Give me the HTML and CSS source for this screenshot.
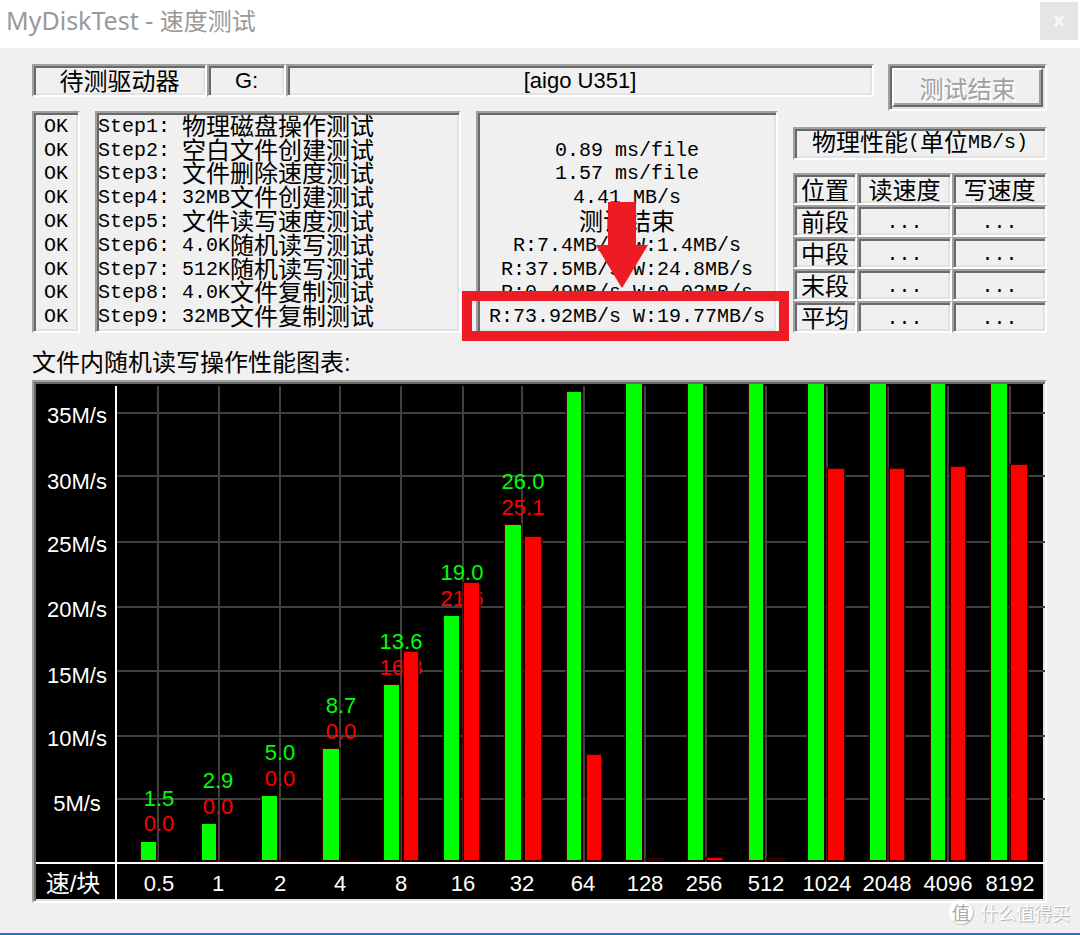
FILE: index.html
```html
<!DOCTYPE html>
<html lang="zh-CN">
<head>
<meta charset="utf-8">
<title>MyDiskTest - 速度测试</title>
<link rel="stylesheet" href="styles.css">
</head>
<body>
<header class="titlebar">
  <h1 class="title">MyDiskTest - <span class="zh">速度测试</span></h1>
  <button class="close" type="button" aria-label="关闭">
    <svg width="12" height="12" viewBox="0 0 12 12"><path d="M2 1L10 11M10 1L2 11" stroke="#f6f6f6" stroke-width="3"/></svg>
  </button>
</header>
<main class="window">
  <section class="top">
    <div class="drive">
      <div class="sunken drive-label zh">待测驱动器</div>
      <div class="sunken drive-letter">G:</div>
      <div class="sunken drive-name">[aigo U351]</div>
    </div>
    <div class="finish-wrap sunken"><button class="finish zh" type="button" disabled>测试结束</button></div>
  </section>

  <section class="panels">
    <ul class="sunken list status">
      <li>OK</li><li>OK</li><li>OK</li><li>OK</li><li>OK</li><li>OK</li><li>OK</li><li>OK</li><li>OK</li>
    </ul>
    <ul class="sunken list steps">
      <li>Step1: <span class="zh">物理磁盘操作测试</span></li>
      <li>Step2: <span class="zh">空白文件创建测试</span></li>
      <li>Step3: <span class="zh">文件删除速度测试</span></li>
      <li>Step4: 32MB<span class="zh">文件创建测试</span></li>
      <li>Step5: <span class="zh">文件读写速度测试</span></li>
      <li>Step6: 4.0K<span class="zh">随机读写测试</span></li>
      <li>Step7: 512K<span class="zh">随机读写测试</span></li>
      <li>Step8: 4.0K<span class="zh">文件复制测试</span></li>
      <li>Step9: 32MB<span class="zh">文件复制测试</span></li>
    </ul>
    <div class="results">
      <ul class="sunken list values">
        <li></li>
        <li>0.89 ms/file</li>
        <li>1.57 ms/file</li>
        <li>4.41 MB/s</li>
        <li><span class="zh">测试结束</span></li>
        <li>R:7.4MB/s W:1.4MB/s</li>
        <li>R:37.5MB/s W:24.8MB/s</li>
        <li>R:0.49MB/s W:0.02MB/s</li>
        <li>R:73.92MB/s W:19.77MB/s</li>
      </ul>
      <svg class="arrow" width="52" height="86" viewBox="0 0 52 86"><path d="M12 0H40V43H52L28 83L26 86L24 83L0 43H12Z" fill="#ed1c24"/></svg>
      <div class="marker"></div>
    </div>
    <div class="physical">
      <h2 class="sunken physical-title"><span class="zh">物理性能</span>(<span class="zh">单位</span>MB/s)</h2>
      <table class="grid">
        <thead><tr><th class="sunken pos">位置</th><th class="sunken">读速度</th><th class="sunken">写速度</th></tr></thead>
        <tbody>
          <tr><th class="sunken">前段</th><td class="sunken">...</td><td class="sunken">...</td></tr>
          <tr><th class="sunken">中段</th><td class="sunken">...</td><td class="sunken">...</td></tr>
          <tr><th class="sunken">末段</th><td class="sunken">...</td><td class="sunken">...</td></tr>
          <tr><th class="sunken">平均</th><td class="sunken">...</td><td class="sunken">...</td></tr>
        </tbody>
      </table>
    </div>
  </section>

  <h2 class="chart-title">文件内随机读写操作性能图表:</h2>
  <figure class="sunken chart">
    <svg class="plot" viewBox="0 0 1009 517" role="img" aria-label="文件内随机读写操作性能图表">
      <g class="gridlines">
        <path d="M81 29H1009M81 92H1009M81 158H1009M81 223H1009M81 287H1009M81 352H1009M81 415H1009"/>
        <path d="M122 2V478M183 2V478M244 2V478M304 2V478M365 2V478M427 2V478M486 2V478M548 2V478M609 2V478M670 2V478M730 2V478M791 2V478M852 2V478M912 2V478M974 2V478"/>
      </g>
      <g class="read-text">
        <text x="123" y="422">1.5</text><text x="182" y="404">2.9</text><text x="244" y="376">5.0</text><text x="305" y="329">8.7</text>
        <text x="365" y="265">13.6</text><text x="426" y="196">19.0</text><text x="487" y="105">26.0</text>
      </g>
      <g class="write-text">
        <text x="123" y="447">0.0</text><text x="182" y="430">0.0</text><text x="244" y="402">0.0</text><text x="305" y="355">0.0</text>
        <text x="365" y="291">16.3</text><text x="426" y="222">21.6</text><text x="487" y="131">25.1</text>
      </g>
      <g class="faint">
        <rect x="122" y="476" width="20" height="2"/><rect x="183" y="476" width="20" height="2"/><rect x="243" y="476" width="20" height="2"/><rect x="304" y="476" width="20" height="2"/>
        <rect x="609" y="474" width="19" height="3"/><rect x="730" y="474" width="19" height="3"/>
      </g>
      <g class="read-bars">
        <rect x="105" y="458" width="15" height="18"/>
        <rect x="166" y="440" width="14" height="36"/>
        <rect x="226" y="412" width="15" height="64"/>
        <rect x="287" y="365" width="16" height="111"/>
        <rect x="348" y="301" width="15" height="175"/>
        <rect x="408" y="232" width="15" height="244"/>
        <rect x="469" y="141" width="16" height="335"/>
        <rect x="531" y="8" width="14" height="468"/>
        <rect x="590" y="0" width="16" height="476"/>
        <rect x="652" y="0" width="15" height="476"/>
        <rect x="713" y="0" width="14" height="476"/>
        <rect x="772" y="0" width="16" height="476"/>
        <rect x="834" y="0" width="16" height="476"/>
        <rect x="895" y="0" width="14" height="476"/>
        <rect x="955" y="0" width="16" height="476"/>
      </g>
      <g class="write-bars">
        <rect x="368" y="268" width="14" height="208"/>
        <rect x="428" y="199" width="15" height="277"/>
        <rect x="489" y="153" width="16" height="323"/>
        <rect x="551" y="371" width="14" height="105"/>
        <rect x="671" y="474" width="15" height="2"/>
        <rect x="792" y="85" width="16" height="391"/>
        <rect x="854" y="85" width="14" height="391"/>
        <rect x="915" y="83" width="14" height="393"/>
        <rect x="975" y="81" width="16" height="395"/>
      </g>
      <path class="axes" d="M0 479H1009M80 2V517"/>
      <g class="labels">
        <text x="41" y="39">35M/s</text><text x="41" y="105">30M/s</text><text x="41" y="168">25M/s</text><text x="41" y="233">20M/s</text>
        <text x="41" y="299">15M/s</text><text x="41" y="362">10M/s</text><text x="41" y="427">5M/s</text>
        <text class="axis-name" x="37" y="508">速/块</text>
        <text x="123" y="507">0.5</text><text x="182" y="507">1</text><text x="244" y="507">2</text><text x="304" y="507">4</text>
        <text x="365" y="507">8</text><text x="427" y="507">16</text><text x="486" y="507">32</text><text x="547" y="507">64</text>
        <text x="609" y="507">128</text><text x="668" y="507">256</text><text x="730" y="507">512</text><text x="791" y="507">1024</text>
        <text x="851" y="507">2048</text><text x="912" y="507">4096</text><text x="974" y="507">8192</text>
      </g>
    </svg>
  </figure>
</main>
<div class="watermark"><span class="badge">值</span><span>什么值得买</span></div>
</body>
</html>
```
FILE: styles.css
```css
* { box-sizing: border-box; margin: 0; padding: 0; }

body {
  position: relative;
  display: flex;
  flex-direction: column;
  min-height: 100vh;
  background: #f0f0f0;
  border-bottom: 2px solid #0a7fc4;
  color: #000;
  font-family: "Liberation Sans", "Noto Sans CJK SC", sans-serif;
  font-size: 22px;
  line-height: 24px;
}

.zh { font-family: "Noto Sans CJK SC", sans-serif; font-size: 24px; }

.titlebar {
  display: flex;
  justify-content: space-between;
  align-items: flex-start;
  height: 48px;
  padding: 2px 2px 0 6px;
  background: #fff;
}
.title {
  color: #999;
  font-family: "Noto Sans", "Noto Sans CJK SC", sans-serif;
  font-size: 25px;
  font-weight: 400;
  line-height: 36px;
}
.close {
  display: grid;
  place-items: center;
  width: 38px;
  height: 38px;
  border: 0;
  background: #e5e5e5;
}

.window { padding: 16px 33px 30px 32px; }

.sunken {
  border: 2px solid;
  border-color: #a0a0a0 #fff #fff #a0a0a0;
  box-shadow: inset 2px 2px #696969, inset -2px -2px #e3e3e3;
}

.top { display: flex; align-items: flex-start; gap: 14px; }
.drive { display: flex; flex: 1; height: 33px; text-align: center; line-height: 30px; }
.drive-label { width: 175px; line-height: 28px; }
.drive-letter { width: 79px; }
.drive-name { flex: 1; }
.finish-wrap { width: 159px; height: 47px; padding: 2px; }
.finish {
  display: block;
  width: 100%;
  height: 100%;
  border: 2px solid;
  border-color: #fff #696969 #696969 #fff;
  background: #f0f0f0;
  box-shadow: inset -2px -2px #a0a0a0;
  color: #a0a0a0;
  text-shadow: 2px 2px #fff;
  line-height: 32px;
}

.panels {
  display: grid;
  grid-template-columns: 48px minmax(0, 1fr) 302px 254px;
  gap: 15px;
  min-height: 222px;
}
.list {
  display: grid;
  grid-auto-rows: 1fr;
  align-items: center;
  padding: 2px 0;
  list-style: none;
  font-family: "Liberation Mono", monospace;
  font-size: 20px;
  line-height: 22px;
  white-space: pre;
}
.list li { height: 22px; }
.list .zh, .physical-title .zh { line-height: 0; vertical-align: -3px; }
.status, .values { text-align: center; }
.steps { padding-left: 1px; }
.results { position: relative; display: grid; }
.arrow { position: absolute; top: 91px; left: 120px; }
.marker {
  position: absolute;
  top: 180px;
  right: -11px;
  left: -14px;
  height: 50px;
  border: 10px solid #ed1c24;
}

.physical {
  display: flex;
  flex-direction: column;
  justify-content: space-between;
  padding-top: 16px;
}
.physical-title {
  height: 33px;
  font-family: "Liberation Mono", monospace;
  font-size: 20px;
  font-weight: 400;
  line-height: 28px;
  text-align: center;
}
.grid { width: 100%; border-spacing: 0; table-layout: fixed; }
.grid th, .grid td { height: 32px; text-align: center; line-height: 28px; }
.grid tr:last-child > * { height: 31px; }
.grid th { font-family: "Noto Sans CJK SC", sans-serif; font-size: 24px; font-weight: 400; }
.grid td { padding-top: 4px; font-family: "Liberation Mono", monospace; font-size: 20px; line-height: 22px; }
.grid .pos { width: 64px; }

.chart-title {
  padding: 18px 0 5px;
  font-size: 24px;
  font-weight: 400;
  line-height: 24px;
}
.chart { padding: 2px 0 0 2px; background: #000; }
.plot {
  display: block;
  width: 100%;
  height: auto;
  font-size: 22px;
  text-anchor: middle;
}
.gridlines path { fill: none; stroke: #404040; stroke-width: 2; }
.axes { fill: none; stroke: #fff; stroke-width: 2; }
.read-text { fill: #0f0; }
.write-text { fill: #f00; }
.labels { fill: #fff; }
.axis-name { font-size: 24px; }
.faint { fill: #300; }
.read-bars, .write-bars { stroke: #300; stroke-width: 3; paint-order: stroke; }
.read-bars { fill: #0f0; }
.write-bars { fill: #f00; }

.watermark {
  position: absolute;
  right: 10px;
  bottom: 9px;
  display: flex;
  align-items: center;
  gap: 7px;
  color: #fff;
  font-family: "Noto Sans CJK SC", sans-serif;
  font-size: 18px;
  text-shadow: 1px 1px 1px #aaa;
}
.badge {
  width: 24px;
  height: 24px;
  border-radius: 50%;
  background: #fff;
  box-shadow: 1px 1px 1px #bbb;
  color: #aaa;
  text-align: center;
  text-shadow: none;
}
```
